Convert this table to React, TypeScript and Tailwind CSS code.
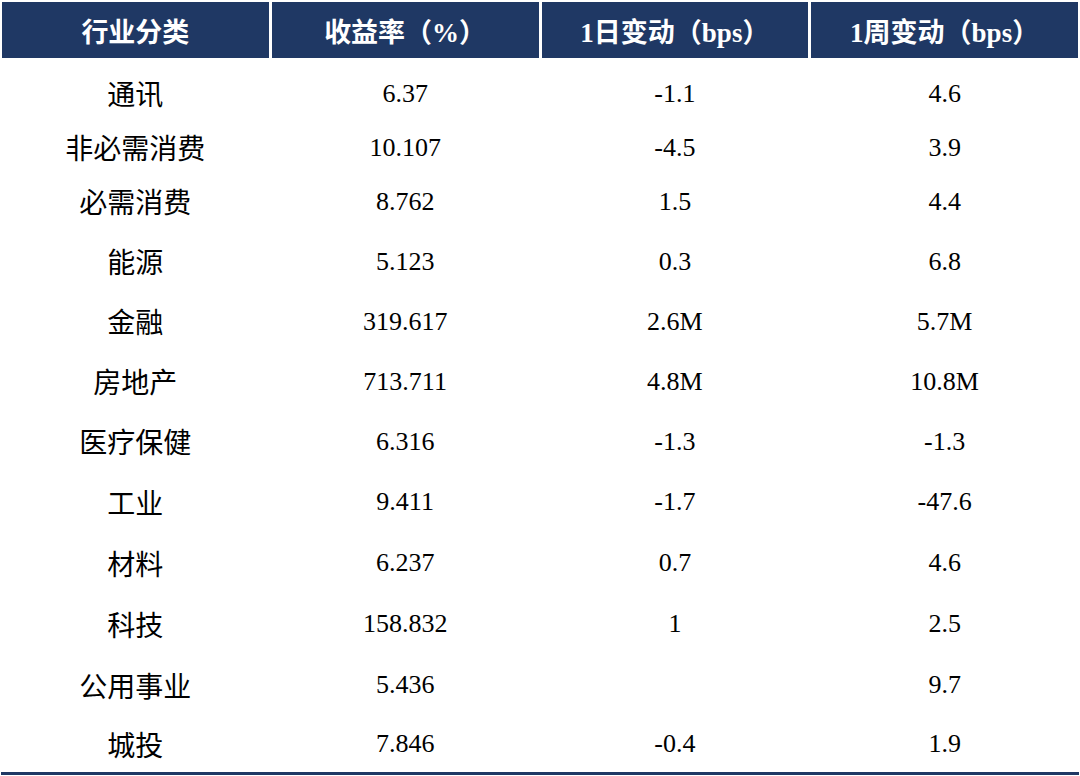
import React from "react";

const rows: [string, string, string, string][] = [
  ["通讯", "6.37", "-1.1", "4.6"],
  ["非必需消费", "10.107", "-4.5", "3.9"],
  ["必需消费", "8.762", "1.5", "4.4"],
  ["能源", "5.123", "0.3", "6.8"],
  ["金融", "319.617", "2.6M", "5.7M"],
  ["房地产", "713.711", "4.8M", "10.8M"],
  ["医疗保健", "6.316", "-1.3", "-1.3"],
  ["工业", "9.411", "-1.7", "-47.6"],
  ["材料", "6.237", "0.7", "4.6"],
  ["科技", "158.832", "1", "2.5"],
  ["公用事业", "5.436", "", "9.7"],
  ["城投", "7.846", "-0.4", "1.9"],
];

// row heights, tuned so each line of text lands where it does in the chart
const heights = [
  "h-[54px]",
  "h-[54px]",
  "h-[54px]",
  "h-[60px]",
  "h-[60px]",
  "h-[60px]",
  "h-[60px]",
  "h-[61px]",
  "h-[61px]",
  "h-[61px]",
  "h-[61px]",
  "h-[57px]",
];

const headers = ["行业分类", "收益率（%）", "1日变动（bps）", "1周变动（bps）"];

const cjk = "font-[family-name:'Noto_Sans_CJK_SC',sans-serif]";
const serif = "font-[family-name:'Liberation_Serif','Noto_Sans_CJK_SC',serif]";

export default function App() {
  return (
    <div className="w-[1080px] h-[776px] bg-white overflow-hidden">
      <div className="pt-[2px] px-[2px]">
        {/* Header */}
        <div className="grid grid-cols-4 gap-[3px] h-[56px]">
          {headers.map((h) => (
            <div
              key={h}
              className={`bg-[#1f3864] flex items-center justify-center pt-[6px] text-white font-bold text-[27px] ${serif}`}
            >
              {h}
            </div>
          ))}
        </div>
      </div>

      {/* Body */}
      <div className="pt-[8px] mx-[1px] border-b-[3px] border-[#1f3864]">
        {rows.map((r, i) => (
          <div
            key={r[0]}
            className={`grid grid-cols-4 gap-[3px] px-[1px] items-center text-black ${heights[i]} ${
              i === 3 ? "mt-[3px]" : ""
            }`}
          >
            <div className={`text-center text-[28px] ${cjk}`}>{r[0]}</div>
            <div className={`text-center text-[26px] ${serif}`}>{r[1]}</div>
            <div className={`text-center text-[26px] ${serif}`}>{r[2]}</div>
            <div className={`text-center text-[26px] ${serif}`}>{r[3]}</div>
          </div>
        ))}
      </div>
    </div>
  );
}
